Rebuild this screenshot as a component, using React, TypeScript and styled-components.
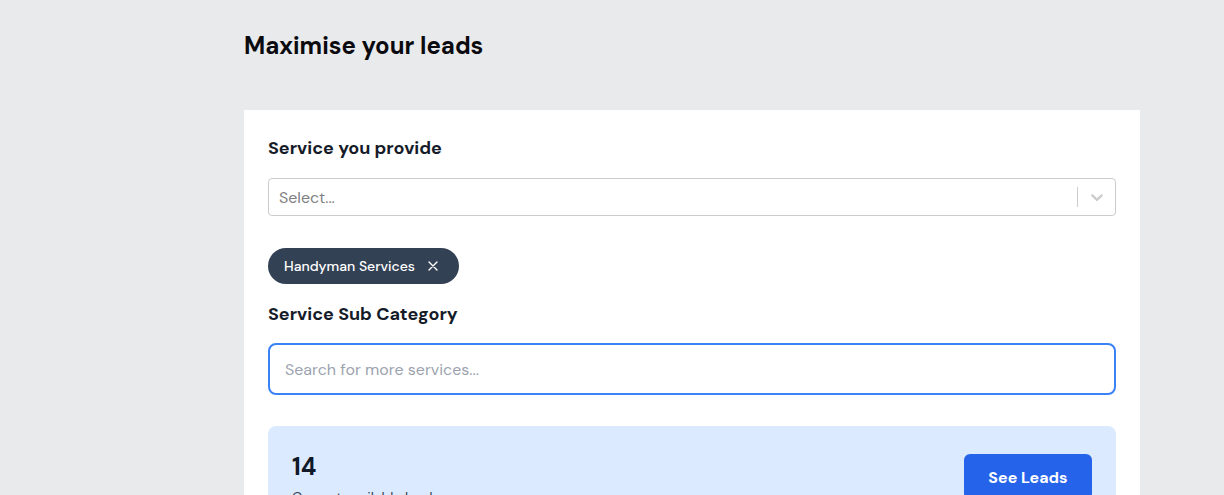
import React from "react";
import styled, { createGlobalStyle } from "styled-components";

const Global = createGlobalStyle`
  html, body { margin: 0; padding: 0; background: #e9eaec; }
  body { font-family: "DM Sans", Inter, "Liberation Sans", sans-serif; color: #111827; }
  * { box-sizing: border-box; }
`;

const Page = styled.div`
  width: 896px;
  margin-left: 244px;
  padding-top: 31px;
`;

const Title = styled.h1`
  margin: 0 0 49px;
  font-size: 24px;
  line-height: 30px;
  font-weight: 700;
  color: #0b0b0f;
`;

const Card = styled.section`
  background: #fff;
  padding: 25px 24px 24px;
  min-height: 400px;
  display: flex;
  flex-direction: column;
  & > * { flex-shrink: 0; }
`;

const Label = styled.div<{ $mb?: number }>`
  font-size: 18px;
  line-height: 26px;
  font-weight: 700;
  color: #151b28;
  margin-bottom: ${(p) => p.$mb ?? 17}px;
`;

const Select = styled.div`
  height: 38px;
  border: 1px solid #cccccc;
  border-radius: 4px;
  display: flex;
  align-items: center;
  padding-left: 10px;
  font-size: 16px;
  color: #808080;
`;

const SelectText = styled.span`
  flex: 1;
`;

const Sep = styled.span`
  width: 1px;
  height: 20px;
  background: #cccccc;
`;

const Chevron = styled.span`
  width: 37px;
  display: flex;
  justify-content: center;
  color: #cccccc;
`;

const Chips = styled.div`
  display: flex;
  margin-top: 32px;
  margin-bottom: 17px;
`;

const Chip = styled.div`
  height: 36px;
  border-radius: 18px;
  background: #334155;
  color: #fff;
  display: flex;
  align-items: center;
  gap: 12px;
  padding: 0 20px 0 16px;
  font-size: 14px;
  font-weight: 500;
`;

const Input = styled.input`
  height: 52px;
  border: 2px solid #3b82f6;
  border-radius: 8px;
  padding: 0 15px;
  font: inherit;
  font-size: 16px;
  outline: none;
  color: #111827;
  &::placeholder { color: #9ca3af; }
`;

const Leads = styled.div`
  margin-top: 31px;
  background: #dbeafe;
  border-radius: 8px;
  padding: 26px 24px;
  display: flex;
  align-items: flex-start;
  justify-content: space-between;
`;

const Count = styled.div`
  font-size: 24px;
  line-height: 30px;
  font-weight: 700;
  color: #111827;
`;

const Sub = styled.div`
  margin-top: 5px;
  font-size: 14px;
  line-height: 20px;
  color: #374151;
`;

const Button = styled.button`
  margin-top: 2px;
  height: 46px;
  width: 128px;
  border: 0;
  border-radius: 6px;
  background: #2563eb;
  color: #fff;
  font: inherit;
  font-size: 16px;
  font-weight: 700;
`;

export default function App() {
  return (
    <>
      <Global />
      <Page>
        <Title>Maximise your leads</Title>
        <Card>
          <Label>Service you provide</Label>
          <Select>
            <SelectText>Select...</SelectText>
            <Sep />
            <Chevron>
              <svg width="20" height="20" viewBox="0 0 20 20" fill="currentColor">
                <path d="M4.516 7.548c.436-.446 1.043-.481 1.576 0L10 11.295l3.908-3.747c.533-.481 1.141-.446 1.574 0 .436.445.408 1.197 0 1.615-.406.418-4.695 4.502-4.695 4.502a1.095 1.095 0 0 1-1.576 0S4.924 9.581 4.516 9.163c-.409-.418-.436-1.17 0-1.615z" />
              </svg>
            </Chevron>
          </Select>
          <Chips>
            <Chip>
              Handyman Services
              <svg width="12" height="12" viewBox="0 0 12 12" stroke="#fff" strokeWidth="1.4" strokeLinecap="round">
                <path d="M2 2l8 8M10 2l-8 8" />
              </svg>
            </Chip>
          </Chips>
          <Label $mb={16}>Service Sub Category</Label>
          <Input placeholder="Search for more services..." autoFocus />
          <Leads>
            <div>
              <Count>14</Count>
              <Sub>Current available leads</Sub>
            </div>
            <Button>See Leads</Button>
          </Leads>
        </Card>
      </Page>
    </>
  );
}
